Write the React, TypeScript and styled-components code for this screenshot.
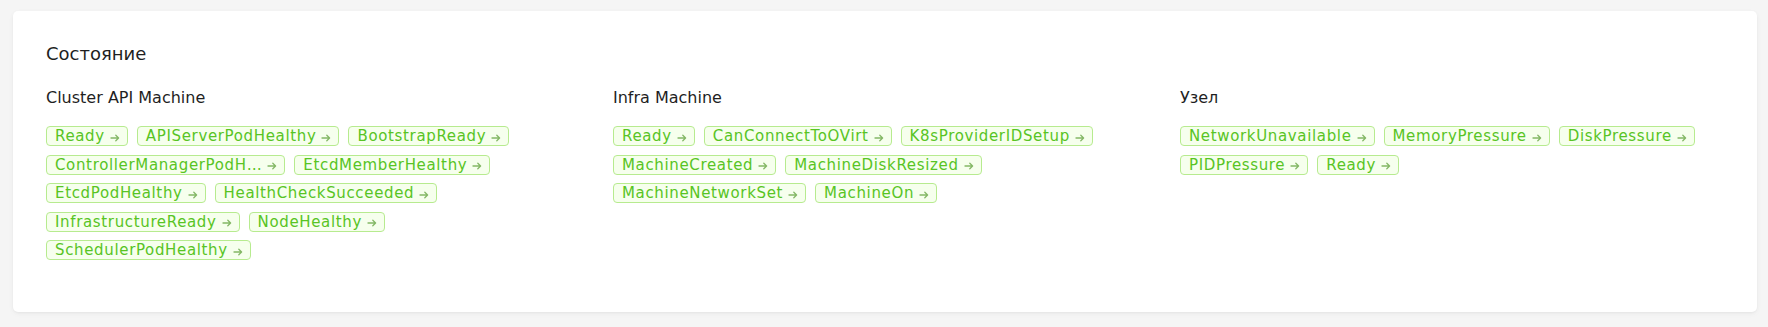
import React from 'react'
import styled, { createGlobalStyle } from 'styled-components'

const FONT = `'DejaVu Sans', 'Liberation Sans', sans-serif`

const SECTIONS = [
  {
    title: 'Cluster API Machine',
    conditions: [
      'Ready', 'APIServerPodHealthy', 'BootstrapReady', 'ControllerManagerPodHealthy',
      'EtcdMemberHealthy', 'EtcdPodHealthy', 'HealthCheckSucceeded', 'InfrastructureReady',
      'NodeHealthy', 'SchedulerPodHealthy',
    ],
  },
  {
    title: 'Infra Machine',
    conditions: [
      'Ready', 'CanConnectToOVirt', 'K8sProviderIDSetup', 'MachineCreated',
      'MachineDiskResized', 'MachineNetworkSet', 'MachineOn',
    ],
  },
  {
    title: 'Узел',
    conditions: ['NetworkUnavailable', 'MemoryPressure', 'DiskPressure', 'PIDPressure', 'Ready'],
  },
]

// long condition names get cut, same as the real page
const short = (name: string) => name.length > 24 ? name.slice(0, 21) + '…' : name

const Global = createGlobalStyle`
  html, body { margin: 0; padding: 0; background: #f5f5f5; }
  body { font-family: ${FONT}; color: #1f1f1f; }
`

const Page = styled.div`
  height: 327px;
  box-sizing: border-box;
  padding: 11px 11px 0 13px;
`

const Card = styled.section`
  background: #fff;
  border-radius: 5px;
  box-shadow: 0 1px 2px 0 rgba(0,0,0,.03), 0 1px 6px -1px rgba(0,0,0,.03), 0 2px 6px 0 rgba(0,0,0,.03);
  padding: 30px 34px 52px 33px;
`

const Title = styled.h2`
  margin: 0 0 19px;
  font-size: 18px;
  line-height: 26px;
  font-weight: 400;
  color: #1f1f1f;
`

const Columns = styled.div`
  display: grid;
  grid-template-columns: repeat(3, 1fr);
  column-gap: 24px;
`

const Column = styled.div`
  display: flex;
  flex-direction: column;
  gap: 16px;
  min-width: 0;
`

const Heading = styled.h3`
  margin: 0;
  font-size: 16px;
  line-height: 24px;
  font-weight: 400;
  color: #1f1f1f;
`

const Tags = styled.div`
  display: flex;
  flex-wrap: wrap;
  column-gap: 9px;
  row-gap: 8.5px;
`

const Tag = styled.span`
  display: inline-flex;
  align-items: center;
  gap: 5px;
  height: 20px;
  box-sizing: border-box;
  padding: 0 7px 0 8px;
  border: 1px solid #b7eb8f;
  border-radius: 4px;
  background: #f6ffed;
  color: #58c424;
  font-size: 15px;
  line-height: 18px;
  letter-spacing: .65px;
  white-space: nowrap;
`

const Arrow = styled.svg`
  flex: none;
  margin-top: 3px;
  color: #84b866;
`

const ArrowIcon = () => (
  <Arrow width='10' height='8' viewBox='0 0 10 8' fill='none' stroke='currentColor' strokeWidth='1.3' strokeLinecap='round' strokeLinejoin='round'>
    <path d='M1 4h7.5M5.8 1.2 8.6 4 5.8 6.8' />
  </Arrow>
)

const Condition = ({ name }: { name: string }) => (
  <Tag title={name}>
    {short(name)}
    <ArrowIcon />
  </Tag>
)

export default function App() {
  return <>
    <Global />
    <Page>
      <Card>
        <Title>Состояние</Title>
        <Columns>
          {SECTIONS.map(section => (
            <Column key={section.title}>
              <Heading>{section.title}</Heading>
              <Tags>
                {section.conditions.map(name => <Condition key={name} name={name} />)}
              </Tags>
            </Column>
          ))}
        </Columns>
      </Card>
    </Page>
  </>
}
